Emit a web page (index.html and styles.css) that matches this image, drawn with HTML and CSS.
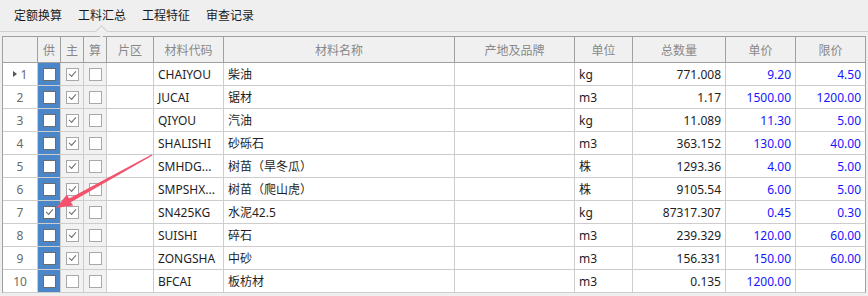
FILE: index.html
```html
<!DOCTYPE html>
<html lang="zh-CN">
<head>
	<meta charset="UTF-8">
	<title>工料汇总</title>
	<link rel="stylesheet" href="styles.css">
</head>
<body>
	<div class="tabs">
		<div class="tab">定额换算</div>
		<div class="tab active">工料汇总</div>
		<div class="tab">工程特征</div>
		<div class="tab">审查记录</div>
	</div>

	<div class="grid_con">
		<div class="grid">
			<!-- 表头 -->
			<div class="hd"></div>
			<div class="hd">供</div>
			<div class="hd">主</div>
			<div class="hd">算</div>
			<div class="hd">片区</div>
			<div class="hd">材料代码</div>
			<div class="hd">材料名称</div>
			<div class="hd">产地及品牌</div>
			<div class="hd">单位</div>
			<div class="hd">总数量</div>
			<div class="hd">单价</div>
			<div class="hd">限价</div>

			<!-- 1 -->
			<div class="c num"><span class="cur"></span>1</div>
			<div class="c gong"><span class="box"></span></div>
			<div class="c chk"><span class="box on"></span></div>
			<div class="c chk"><span class="box"></span></div>
			<div class="c"></div>
			<div class="c">CHAIYOU</div>
			<div class="c">柴油</div>
			<div class="c"></div>
			<div class="c">kg</div>
			<div class="c r">771.008</div>
			<div class="c r blue">9.20</div>
			<div class="c r blue">4.50</div>

			<!-- 2 -->
			<div class="c num">2</div>
			<div class="c gong"><span class="box"></span></div>
			<div class="c chk"><span class="box on"></span></div>
			<div class="c chk"><span class="box"></span></div>
			<div class="c"></div>
			<div class="c">JUCAI</div>
			<div class="c">锯材</div>
			<div class="c"></div>
			<div class="c">m3</div>
			<div class="c r">1.17</div>
			<div class="c r blue">1500.00</div>
			<div class="c r blue">1200.00</div>

			<!-- 3 -->
			<div class="c num">3</div>
			<div class="c gong"><span class="box"></span></div>
			<div class="c chk"><span class="box on"></span></div>
			<div class="c chk"><span class="box"></span></div>
			<div class="c"></div>
			<div class="c">QIYOU</div>
			<div class="c">汽油</div>
			<div class="c"></div>
			<div class="c">kg</div>
			<div class="c r">11.089</div>
			<div class="c r blue">11.30</div>
			<div class="c r blue">5.00</div>

			<!-- 4 -->
			<div class="c num">4</div>
			<div class="c gong"><span class="box"></span></div>
			<div class="c chk"><span class="box on"></span></div>
			<div class="c chk"><span class="box"></span></div>
			<div class="c"></div>
			<div class="c">SHALISHI</div>
			<div class="c">砂砾石</div>
			<div class="c"></div>
			<div class="c">m3</div>
			<div class="c r">363.152</div>
			<div class="c r blue">130.00</div>
			<div class="c r blue">40.00</div>

			<!-- 5 -->
			<div class="c num">5</div>
			<div class="c gong"><span class="box"></span></div>
			<div class="c chk"><span class="box on"></span></div>
			<div class="c chk"><span class="box"></span></div>
			<div class="c"></div>
			<div class="c">SMHDG...</div>
			<div class="c">树苗（旱冬瓜）</div>
			<div class="c"></div>
			<div class="c">株</div>
			<div class="c r">1293.36</div>
			<div class="c r blue">4.00</div>
			<div class="c r blue">5.00</div>

			<!-- 6 -->
			<div class="c num">6</div>
			<div class="c gong"><span class="box"></span></div>
			<div class="c chk"><span class="box on"></span></div>
			<div class="c chk"><span class="box"></span></div>
			<div class="c"></div>
			<div class="c">SMPSHX...</div>
			<div class="c">树苗（爬山虎）</div>
			<div class="c"></div>
			<div class="c">株</div>
			<div class="c r">9105.54</div>
			<div class="c r blue">6.00</div>
			<div class="c r blue">5.00</div>

			<!-- 7 -->
			<div class="c num">7</div>
			<div class="c gong"><span class="box on"></span></div>
			<div class="c chk"><span class="box on"></span></div>
			<div class="c chk"><span class="box"></span></div>
			<div class="c"></div>
			<div class="c">SN425KG</div>
			<div class="c">水泥42.5</div>
			<div class="c"></div>
			<div class="c">kg</div>
			<div class="c r">87317.307</div>
			<div class="c r blue">0.45</div>
			<div class="c r blue">0.30</div>

			<!-- 8 -->
			<div class="c num">8</div>
			<div class="c gong"><span class="box"></span></div>
			<div class="c chk"><span class="box on"></span></div>
			<div class="c chk"><span class="box"></span></div>
			<div class="c"></div>
			<div class="c">SUISHI</div>
			<div class="c">碎石</div>
			<div class="c"></div>
			<div class="c">m3</div>
			<div class="c r">239.329</div>
			<div class="c r blue">120.00</div>
			<div class="c r blue">60.00</div>

			<!-- 9 -->
			<div class="c num">9</div>
			<div class="c gong"><span class="box"></span></div>
			<div class="c chk"><span class="box on"></span></div>
			<div class="c chk"><span class="box"></span></div>
			<div class="c"></div>
			<div class="c">ZONGSHA</div>
			<div class="c">中砂</div>
			<div class="c"></div>
			<div class="c">m3</div>
			<div class="c r">156.331</div>
			<div class="c r blue">150.00</div>
			<div class="c r blue">60.00</div>

			<!-- 10 -->
			<div class="c num">10</div>
			<div class="c gong"><span class="box"></span></div>
			<div class="c chk"><span class="box"></span></div>
			<div class="c chk"><span class="box"></span></div>
			<div class="c"></div>
			<div class="c">BFCAI</div>
			<div class="c">板枋材</div>
			<div class="c"></div>
			<div class="c">m3</div>
			<div class="c r">0.135</div>
			<div class="c r blue">1200.00</div>
			<div class="c r blue"></div>
		</div>
	</div>

	<!-- 标注箭头 -->
	<svg class="mark" width="868" height="296" viewBox="0 0 868 296">
		<polygon fill="#f2526c" points="151.6,154.4 69.2,198.4 66.8,194.8 56,208 73.2,205.6 70.8,202.2 152.4,155.6"/>
	</svg>
</body>
</html>
```

FILE: styles.css
```css
body{
	margin:0;
	padding:0;
	background-color:#efefef;
	font-family:"Noto Sans","Noto Sans CJK SC",sans-serif;
	font-size:12px;
	color:#1e1e1e;
	position:relative;
	height:296px;
	overflow:hidden;
}

.tabs{
	height:31px;
	border-bottom:1px solid #cfcfcf;
	display:flex;
	padding-left:6px;
}

.tab{
	padding:0 8px;
	line-height:30px;
	font-family:"Noto Sans CJK SC",sans-serif;
	color:#1a1a1a;
	position:relative;
}

.tab.active::after{
	content:"";
	position:absolute;
	left:50%;
	bottom:-5px;
	width:8px;
	height:8px;
	margin-left:-5px;
	background-color:#efefef;
	border-left:1px solid #cfcfcf;
	border-top:1px solid #cfcfcf;
	transform:rotate(45deg);
}

.grid_con{
	padding:4px 0 0 2px;
}

.grid{
	display:grid;
	grid-template-columns:35px 23px 23px 23px 47px 70px 231px 120px 58px 93px 70px 70px;
	grid-auto-rows:23px;
	grid-template-rows:26px;
	width:863px;
	border-left:1px solid #a0a0a0;
	border-top:1px solid #a0a0a0;
	background-color:#fff;
}

.hd{
	background-color:#f0f0f0;
	border-right:1px solid #a0a0a0;
	border-bottom:1px solid #a0a0a0;
	color:#888;
	font-family:"Noto Sans CJK SC",sans-serif;
	display:flex;
	align-items:center;
	justify-content:center;
}

.c{
	border-right:1px solid #cdcdcd;
	border-bottom:1px solid #cdcdcd;
	display:flex;
	align-items:center;
	padding:0 4px;
	white-space:nowrap;
	overflow:hidden;
}

.grid .c:nth-child(12n){
	border-right-color:#a0a0a0;
}

.num{
	justify-content:center;
	color:#6a6a6a;
	padding:0;
}

.cur{
	width:0;
	height:0;
	border-top:3px solid transparent;
	border-bottom:3px solid transparent;
	border-left:4px solid #555;
	margin-right:4px;
}

.gong{
	background-color:#4a86c8;
	justify-content:center;
	padding:0;
}

.chk{
	background-color:#f2f2f2;
	justify-content:center;
	padding:0;
}

.box{
	width:11px;
	height:11px;
	border:1px solid #a8a8a8;
	background-color:#fff;
	position:relative;
}

.gong .box{
	border-color:#6c6c6c;
}

.box.on::after{
	content:"";
	position:absolute;
	left:2px;
	top:2px;
	width:6px;
	height:3px;
	border-left:1.5px solid #6a6a6a;
	border-bottom:1.5px solid #6a6a6a;
	transform:rotate(-48deg);
}

.r{
	justify-content:flex-end;
	color:#222;
}

.blue{
	color:#1414ff;
}

.mark{
	position:absolute;
	left:0;
	top:0;
	pointer-events:none;
}
```
